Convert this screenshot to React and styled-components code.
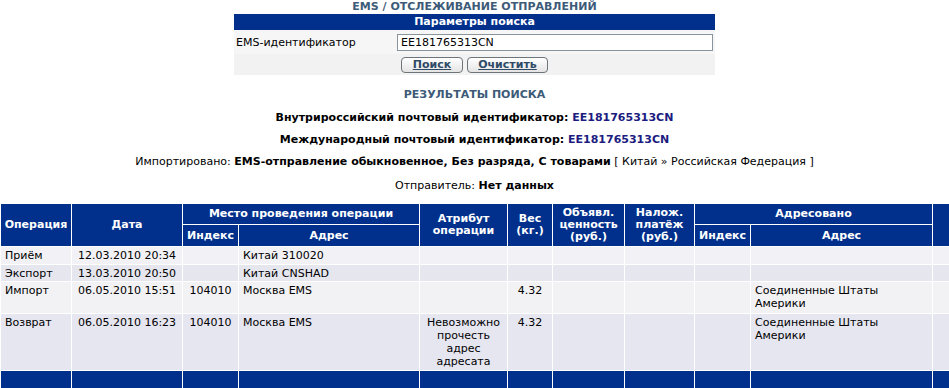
import React from 'react';
import styled, { createGlobalStyle } from 'styled-components';

const GlobalStyle = createGlobalStyle`
  html, body {
    margin: 0;
    padding: 0;
    background: #fff;
    overflow: hidden;
  }
  body {
    font-family: "DejaVu Sans", Verdana, sans-serif;
    font-size: 11px;
    color: #000;
  }
`;

const NAVY = '#00308c';

const Page = styled.div`
  width: 949px;
  overflow: hidden;
`;

const PageTitle = styled.div`
  height: 14px;
  line-height: 13px;
  text-align: center;
  font-weight: bold;
  color: #3d5a78;
`;

const SearchPanel = styled.div`
  width: 481px;
  margin: 0 auto;
  background: #f2f2f2;
`;

const PanelHead = styled.div`
  height: 16px;
  line-height: 16px;
  background: ${NAVY};
  color: #fff;
  font-weight: bold;
  text-align: center;
`;

const FieldRow = styled.div`
  display: flex;
  align-items: center;
  height: 24px;
  padding-left: 2px;
  background: #f6f6f6;
`;

const FieldLabel = styled.label`
  width: 161px;
`;

const TextInput = styled.input`
  box-sizing: border-box;
  width: 316px;
  height: 17px;
  padding: 0 3px;
  border: 1px solid #8a949c;
  background: #fff;
  font: inherit;
  color: #000;
  outline: none;
`;

const ButtonRow = styled.div`
  display: flex;
  justify-content: center;
  align-items: center;
  gap: 4px;
  height: 21px;
`;

const Button = styled.button`
  box-sizing: border-box;
  width: ${p => p.$w}px;
  height: 16px;
  padding: 0;
  border: 1px solid #6e7478;
  border-radius: 4px;
  background: linear-gradient(#ffffff, #e4e4e4);
  font: inherit;
  font-weight: bold;
  color: #2f4a66;
  text-decoration: underline;
  line-height: 14px;
`;

const ResultsTitle = styled.div`
  padding: 13px 0 6px;
  line-height: 13px;
  text-align: center;
  font-weight: bold;
  color: #3d5a78;
`;

const InfoLine = styled.div`
  line-height: 22px;
  text-align: center;
  font-weight: ${p => (p.$bold ? 'bold' : 'normal')};
  margin-top: ${p => p.$mt || 0}px;
`;

const Strong = styled.b`
  font-weight: bold;
`;

const Ident = styled.span`
  color: #1c1c80;
  font-weight: bold;
`;

const Table = styled.table`
  margin-top: 6px;
  width: 972px;
  table-layout: fixed;
  border-collapse: collapse;
`;

const HeadRow = styled.tr`
  height: ${p => p.$h}px;
`;

const Th = styled.th`
  background: ${NAVY};
  color: #fff;
  font-weight: bold;
  line-height: 12px;
  border: 1px solid #fff;
  padding: 0 2px;
  text-align: center;
  vertical-align: middle;
`;

const BodyRow = styled.tr`
  background: ${p => p.$bg};
  height: ${p => p.$h}px;
`;

const Td = styled.td`
  border: 1px solid #fff;
  padding: 2px 4px 1px;
  line-height: 13px;
  vertical-align: top;
  text-align: ${p => p.$align || 'left'};
`;

const FootRow = styled.tr`
  height: 20px;
  background: ${NAVY};
`;

const widths = [71, 111, 56, 181, 88, 45, 72, 70, 56, 182, 40];

const rows = [
  { op: 'Приём', date: '12.03.2010 20:34', idx: '', addr: 'Китай 310020', attr: '', w: '', to: '', bg: '#f2f2f6', h: 18 },
  { op: 'Экспорт', date: '13.03.2010 20:50', idx: '', addr: 'Китай CNSHAD', attr: '', w: '', to: '', bg: '#e6e6ef', h: 17 },
  { op: 'Импорт', date: '06.05.2010 15:51', idx: '104010', addr: 'Москва EMS', attr: '', w: '4.32', to: 'Соединенные Штаты Америки', bg: '#f2f2f4', h: 32 },
  { op: 'Возврат', date: '06.05.2010 16:23', idx: '104010', addr: 'Москва EMS', attr: 'Невозможно прочесть адрес адресата', w: '4.32', to: 'Соединенные Штаты Америки', bg: '#e6e6f0', h: 57 },
];

export default function App() {
  return (
    <Page>
      <GlobalStyle />
      <PageTitle>EMS / ОТСЛЕЖИВАНИЕ ОТПРАВЛЕНИЙ</PageTitle>

      <SearchPanel>
        <PanelHead>Параметры поиска</PanelHead>
        <FieldRow>
          <FieldLabel>EMS-идентификатор</FieldLabel>
          <TextInput defaultValue="EE181765313CN" />
        </FieldRow>
        <ButtonRow>
          <Button $w={62}>Поиск</Button>
          <Button $w={81}>Очистить</Button>
        </ButtonRow>
      </SearchPanel>

      <ResultsTitle>РЕЗУЛЬТАТЫ ПОИСКА</ResultsTitle>
      <InfoLine $bold>
        Внутрироссийский почтовый идентификатор: <Ident>EE181765313CN</Ident>
      </InfoLine>
      <InfoLine $bold>
        Международный почтовый идентификатор: <Ident>EE181765313CN</Ident>
      </InfoLine>
      <InfoLine>
        Импортировано: <Strong>EMS-отправление обыкновенное, Без разряда, С товарами</Strong> [ Китай » Российская Федерация ]
      </InfoLine>
      <InfoLine $mt={2}>
        Отправитель: <Strong>Нет данных</Strong>
      </InfoLine>

      <Table>
        <colgroup>
          {widths.map((w, i) => (
            <col key={i} style={{ width: w }} />
          ))}
        </colgroup>
        <thead>
          <HeadRow $h={21}>
            <Th rowSpan={2}>Операция</Th>
            <Th rowSpan={2}>Дата</Th>
            <Th colSpan={2}>Место проведения операции</Th>
            <Th rowSpan={2}>Атрибут<br />операции</Th>
            <Th rowSpan={2}>Вес<br />(кг.)</Th>
            <Th rowSpan={2}>Объявл.<br />ценность<br />(руб.)</Th>
            <Th rowSpan={2}>Налож.<br />платёж<br />(руб.)</Th>
            <Th colSpan={2}>Адресовано</Th>
            <Th rowSpan={2}></Th>
          </HeadRow>
          <HeadRow $h={22}>
            <Th>Индекс</Th>
            <Th>Адрес</Th>
            <Th>Индекс</Th>
            <Th>Адрес</Th>
          </HeadRow>
        </thead>
        <tbody>
          {rows.map(r => (
            <BodyRow key={r.op} $bg={r.bg} $h={r.h}>
              <Td>{r.op}</Td>
              <Td $align="center">{r.date}</Td>
              <Td $align="center">{r.idx}</Td>
              <Td>{r.addr}</Td>
              <Td $align="center">{r.attr}</Td>
              <Td $align="center">{r.w}</Td>
              <Td></Td>
              <Td></Td>
              <Td></Td>
              <Td>{r.to}</Td>
              <Td></Td>
            </BodyRow>
          ))}
          <FootRow>
            {widths.map((w, i) => (
              <Td key={i}></Td>
            ))}
          </FootRow>
        </tbody>
      </Table>
    </Page>
  );
}
